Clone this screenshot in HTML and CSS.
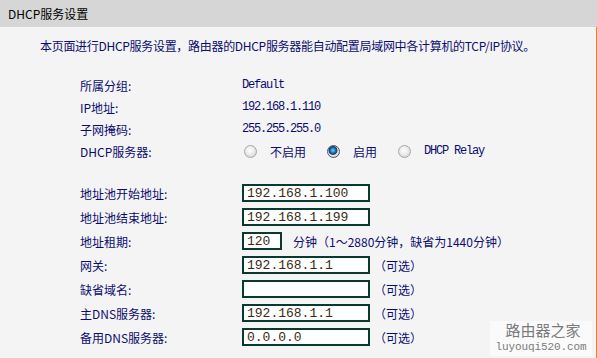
FILE: index.html
```html
<!DOCTYPE html>
<html>
<head>
<meta charset="utf-8">
<meta name="viewport" content="width=device-width, initial-scale=1.0">
<link rel="stylesheet" href="styles.css">
</head>
<body>

<div class="title">DHCP服务设置</div>

<div class="panel">
  <p class="intro">本页面进行DHCP服务设置，路由器的DHCP服务器能自动配置局域网中各计算机的TCP/IP协议。</p>

  <div class="info">
    <span>所属分组:</span><span class="mono">Default</span>
    <span>IP地址:</span><span class="mono">192.168.1.110</span>
    <span>子网掩码:</span><span class="mono">255.255.255.0</span>
    <span>DHCP服务器:</span>
    <span class="radios">
      <input type="radio" name="dhcp" class="radio"><span class="rlabel">不启用</span>
      <input type="radio" name="dhcp" class="radio" checked><span class="rlabel">启用</span>
      <input type="radio" name="dhcp" class="radio"><span class="rlabel mono">DHCP Relay</span>
    </span>
  </div>

  <div class="form">
    <span>地址池开始地址:</span>
    <span class="field"><input type="text" class="box" value="192.168.1.100"></span>
    <span>地址池结束地址:</span>
    <span class="field"><input type="text" class="box" value="192.168.1.199"></span>
    <span>地址租期:</span>
    <span class="field"><input type="text" class="box short" value="120"><span class="note">分钟（1～2880分钟，缺省为1440分钟）</span></span>
    <span>网关:</span>
    <span class="field"><input type="text" class="box" value="192.168.1.1"><span class="opt">（可选）</span></span>
    <span>缺省域名:</span>
    <span class="field"><input type="text" class="box" value=""><span class="opt">（可选）</span></span>
    <span>主DNS服务器:</span>
    <span class="field"><input type="text" class="box" value="192.168.1.1"><span class="opt">（可选）</span></span>
    <span>备用DNS服务器:</span>
    <span class="field"><input type="text" class="box" value="0.0.0.0"><span class="opt">（可选）</span></span>
  </div>

  <div class="watermark">
    <div class="wm-cn">路由器之家</div>
    <div class="wm-url">luyouqi520.com</div>
  </div>
</div>

</body>
</html>
```

FILE: styles.css
```css
* {
  box-sizing: border-box;
}

body {
  margin: 0;
  width: 597px;
  height: 358px;
  overflow: hidden;
  background-color: #f4f4f4;
  font: 12px "Noto Sans CJK SC", "Liberation Sans", sans-serif;
  color: #0c0c70;
}

.title {
  height: 27px;
  line-height: 27px;
  padding-left: 8px;
  background-color: #d6d6d6;
  color: #000;
}

.panel {
  position: relative;
  height: 331px;
  border-right: 1px solid #f0870a;
}

.intro {
  margin: 0;
  padding: 11px 0 0 40px;
  line-height: 16px;
  letter-spacing: -0.3px;
}

.mono {
  font-family: "Liberation Mono", "DejaVu Sans Mono", monospace;
  font-size: 12px;
  letter-spacing: -1.2px;
}

/* upper read-only rows */
.info {
  display: grid;
  grid-template-columns: 162px auto;
  grid-auto-rows: 22px;
  align-items: center;
  margin-top: 20px;
  padding-left: 80px;
}

.radios {
  display: flex;
  align-items: center;
}

.radio {
  appearance: none;
  -webkit-appearance: none;
  width: 13px;
  height: 13px;
  margin: 0 0 0 2px;
  border: 1px solid #a8a8a8;
  border-radius: 50%;
  background: radial-gradient(circle at 45% 40%, #ffffff 0, #eeeeee 40%, #c9c9c9 100%);
}

.radio + .rlabel {
  margin-left: 13px;
}

.rlabel {
  margin-right: 19px;
}

.radio:checked {
  border-color: #555;
  background: radial-gradient(circle at 45% 40%, #7fd0ff 0, #1f7fc4 25%, #0b3f74 45%, #e8e8e8 55%, #bbbbbb 100%);
}

/* editable rows */
.form {
  display: grid;
  grid-template-columns: 162px auto;
  grid-auto-rows: 24px;
  align-items: center;
  margin-top: 19px;
  padding-left: 80px;
}

.field {
  display: flex;
  align-items: center;
}

.box {
  width: 128px;
  height: 18px;
  margin: 0;
  padding: 0 3px;
  border: 2px solid #073b30;
  background-color: #fff;
  font: 13px "Liberation Mono", "DejaVu Sans Mono", monospace;
  color: #3a2a14;
}

.box.short {
  width: 40px;
}

.note {
  margin-left: 11px;
}

.opt {
  margin-left: 4px;
}

.watermark {
  position: absolute;
  left: 490px;
  top: 294px;
  width: 102px;
  height: 35px;
  background-color: rgba(255, 255, 255, 0.55);
  color: #7a7a7a;
  text-align: center;
}

.wm-cn {
  font-size: 15px;
  line-height: 17px;
  padding-left: 4px;
}

.wm-url {
  margin-top: 3px;
  font: 11px "Liberation Mono", monospace;
  line-height: 12px;
  letter-spacing: -0.1px;
}
```
